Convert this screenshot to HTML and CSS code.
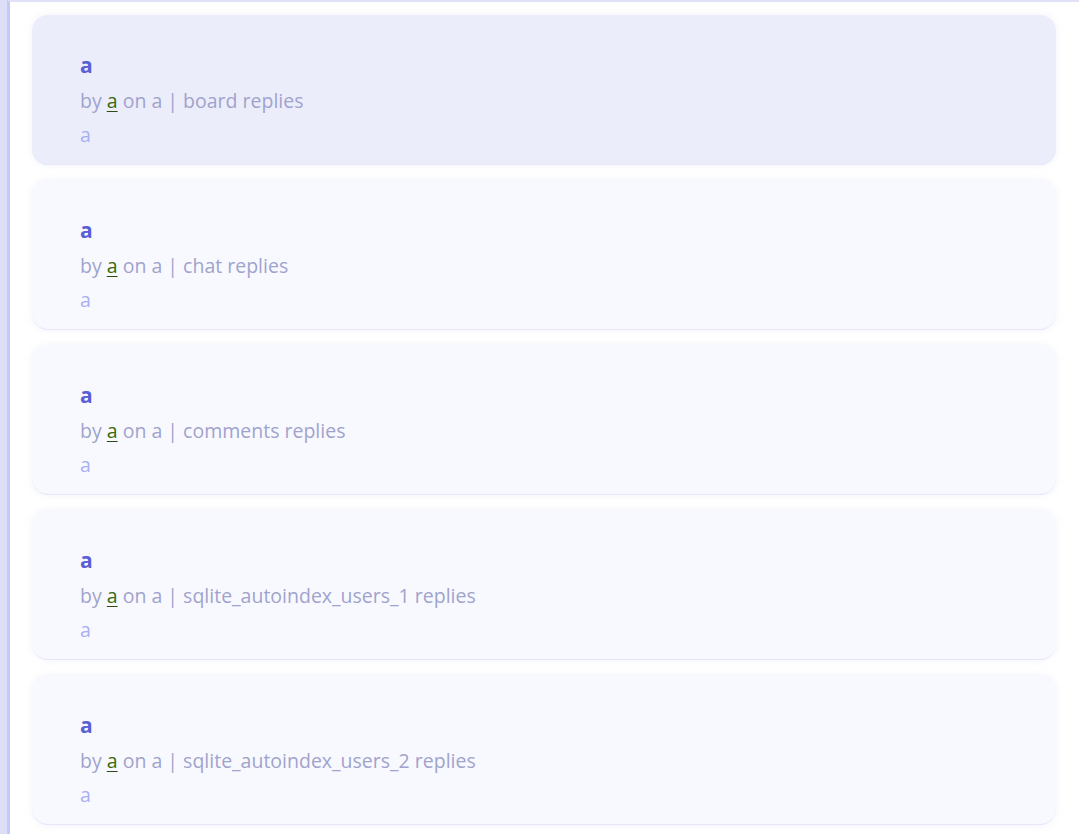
FILE: index.html
```html
<!DOCTYPE html>
<html>
<head>
<meta charset="utf-8">
<link rel="stylesheet" href="styles.css">
</head>
<body>
<div class="frame">
  <div class="panel">
    <div class="list">
      <div class="card active">
        <div class="title">a</div>
        <div class="meta">by <span class="user">a</span> on a | board replies</div>
        <div class="body">a</div>
      </div>
      <div class="card">
        <div class="title">a</div>
        <div class="meta">by <span class="user">a</span> on a | chat replies</div>
        <div class="body">a</div>
      </div>
      <div class="card">
        <div class="title">a</div>
        <div class="meta">by <span class="user">a</span> on a | comments replies</div>
        <div class="body">a</div>
      </div>
      <div class="card">
        <div class="title">a</div>
        <div class="meta">by <span class="user">a</span> on a | sqlite_autoindex_users_1 replies</div>
        <div class="body">a</div>
      </div>
      <div class="card">
        <div class="title">a</div>
        <div class="meta">by <span class="user">a</span> on a | sqlite_autoindex_users_2 replies</div>
        <div class="body">a</div>
      </div>
    </div>
  </div>
</div>
</body>
</html>
```
FILE: styles.css
```css
html, body {
  margin: 0;
  padding: 0;
  height: 100%;
  overflow: hidden;
}
body {
  background: #dddff7;
  font-family: "Open Sans", "DejaVu Sans", sans-serif;
}
.frame {
  padding-left: 7px;
  height: 100%;
}
.panel {
  background: #ffffff;
  border-left: 3px solid #c5c9f6;
  border-top: 2px solid #e1e2f8;
  height: 100%;
  box-sizing: border-box;
}
.list {
  display: flex;
  flex-direction: column;
  gap: 15px;
  padding: 13px 23px 0 22px;
}
.card {
  height: 150px;
  box-sizing: border-box;
  border-radius: 16px;
  background: #f8f9ff;
  border-bottom: 1px solid #e6e8fa;
  box-shadow: 0 0 6px rgba(200, 205, 240, 0.25);
  padding: 35px 48px 0;
}
.card.active {
  background: #ecedfb;
}
.title {
  font-size: 21px;
  font-weight: 700;
  color: #5a5fd6;
  line-height: 30px;
}
.meta {
  font-size: 19.5px;
  font-weight: 500;
  color: #a0a3cc;
  line-height: 34px;
  margin-top: 4px;
}
.user {
  color: #3b6b0c;
  text-decoration: underline;
  text-decoration-color: #2d4a10;
  text-underline-offset: 3px;
}
.body {
  font-size: 19.5px;
  font-weight: 500;
  color: #a8b0f3;
  line-height: 34px;
}
```
